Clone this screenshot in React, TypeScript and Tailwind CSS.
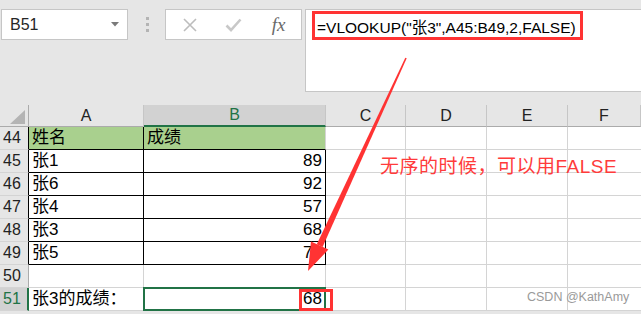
import React from "react";

type Row = { n: string; a?: string; b?: string; head?: boolean; table?: boolean; sel?: boolean };

const rows: Row[] = [
  { n: "44", a: "姓名", b: "成绩", head: true, table: true },
  { n: "45", a: "张1", b: "89", table: true },
  { n: "46", a: "张6", b: "92", table: true },
  { n: "47", a: "张4", b: "57", table: true },
  { n: "48", a: "张3", b: "68", table: true },
  { n: "49", a: "张5", b: "79", table: true },
  { n: "50" },
  { n: "51", a: "张3的成绩：", b: "68", sel: true },
];

const font = { fontFamily: '"Liberation Sans", "Noto Sans CJK SC", sans-serif' };

function ColHead({ label, sel }: { label: string; sel?: boolean }) {
  return (
    <div
      className={
        sel
          ? "flex items-center justify-center bg-[#d2d2d2] border-r border-r-[#c6c6c6] border-b-2 border-b-[#217346] text-[#217346] text-[16px]"
          : "flex items-center justify-center bg-[#e6e6e6] border-r border-r-[#c6c6c6] border-b border-b-[#ababab] text-[#222] text-[16px]"
      }
    >
      {label}
    </div>
  );
}

export default function App() {
  return (
    <div className="relative w-[641px] h-[314px] overflow-hidden bg-[#e6e6e6]" style={font}>
      {/* top bar */}
      <div className="flex items-start pt-[9px] h-[105px]">
        <div className="ml-[1px] w-[127px] h-[31px] bg-white border border-[#c6c6c6] flex items-center pl-[8px] pr-[8px] justify-between">
          <span className="text-[16px] text-[#262626]">B51</span>
          <svg width="8" height="5" viewBox="0 0 8 5">
            <polygon points="0,0 8,0 4,4.5" fill="#7a7a7a" />
          </svg>
        </div>
        <div className="w-[37px] h-[31px] flex flex-col items-center justify-center gap-[3px] pl-[1px]">
          <div className="w-[3px] h-[3px] bg-[#b4b4b4]" />
          <div className="w-[3px] h-[3px] bg-[#b4b4b4]" />
          <div className="w-[3px] h-[3px] bg-[#b4b4b4]" />
        </div>
        <div className="w-[137px] h-[31px] bg-white border border-[#c6c6c6] flex items-center">
          <div className="w-[45px] flex justify-center pl-[3px]">
            <svg width="14" height="14" viewBox="0 0 14 14">
              <path d="M1 1 L13 13 M13 1 L1 13" stroke="#bdbdbd" strokeWidth="1.6" />
            </svg>
          </div>
          <div className="w-[45px] flex justify-center">
            <svg width="17" height="14" viewBox="0 0 17 14">
              <path d="M1.5 7.5 L6 12 L15.5 1.5" stroke="#c8c8c8" strokeWidth="2.6" fill="none" />
            </svg>
          </div>
          <div className="w-[45px] flex justify-center">
            <span
              className="italic text-[19px] text-[#6a6a6a] leading-none"
              style={{ fontFamily: '"Liberation Serif", serif' }}
            >
              fx
            </span>
          </div>
        </div>
        <div className="ml-[3px] flex-1 h-[83px] bg-white border border-r-0 border-[#c6c6c6] pl-[11px] pt-[6px]">
          <span className="text-[15.5px] text-black">=VLOOKUP("张3",A45:B49,2,FALSE)</span>
        </div>
      </div>

      {/* grid */}
      <div className="grid grid-cols-[29px_115px_182px_80px_81px_81px_73px] grid-rows-[22px_repeat(8,23px)]">
        <div className="relative bg-[#e6e6e6] border-r border-r-[#ababab] border-b border-b-[#ababab]">
          <svg className="absolute left-[10px] top-[5px]" width="15" height="14" viewBox="0 0 15 14">
            <polygon points="15,0 15,14 0,14" fill="#b4b4b4" />
          </svg>
        </div>
        <ColHead label="A" />
        <ColHead label="B" sel />
        <ColHead label="C" />
        <ColHead label="D" />
        <ColHead label="E" />
        <ColHead label="F" />

        {rows.map((r) => (
          <React.Fragment key={r.n}>
            <div
              className={
                r.sel
                  ? "flex items-center pl-[3px] bg-[#d2d2d2] text-[#217346] text-[16px] border-r-2 border-r-[#217346] border-b border-b-[#d4d4d4]"
                  : r.table
                  ? "flex items-center pl-[3px] bg-[#e6e6e6] text-[#222] text-[16px] border-r border-r-black border-b border-b-[#d4d4d4]"
                  : "flex items-center pl-[3px] bg-[#e6e6e6] text-[#222] text-[16px] border-r border-r-[#ababab] border-b border-b-[#d4d4d4]"
              }
            >
              {r.n}
            </div>
            <div
              className={
                r.head
                  ? "flex items-center pl-[3px] bg-[#a9d08e] text-[17px] text-black border-r border-r-black border-b border-b-black"
                  : r.table
                  ? "flex items-center pl-[3px] bg-white text-[17px] text-black border-r border-r-black border-b border-b-black"
                  : "flex items-center pl-[3px] bg-white text-[17px] text-black border-r border-r-[#d4d4d4] border-b border-b-[#d4d4d4]"
              }
            >
              {r.a}
            </div>
            <div
              className={
                r.head
                  ? "relative flex items-center pl-[3px] bg-[#a9d08e] text-[17px] text-black border-r border-r-[#d4d4d4] border-b border-b-black"
                  : r.table
                  ? "relative flex items-center justify-end pr-[3px] bg-white text-[17px] text-black border-r border-r-black border-b border-b-black"
                  : "relative flex items-center justify-end pr-[3px] bg-white text-[17px] text-black border-r border-r-[#d4d4d4] border-b border-b-[#d4d4d4]"
              }
            >
              {r.b}
              {r.sel && (
                <>
                  <div className="absolute left-[-1px] top-[-1px] w-[183px] h-[24px] border-2 border-[#217346]" />
                  <div className="absolute left-[155px] top-[1px] w-[34px] h-[22px] border-[3px] border-[#f33]" />
                </>
              )}
            </div>
            <div className="bg-white border-r border-r-[#d4d4d4] border-b border-b-[#d4d4d4]" />
            <div className="bg-white border-r border-r-[#d4d4d4] border-b border-b-[#d4d4d4]" />
            <div className="bg-white border-r border-r-[#d4d4d4] border-b border-b-[#d4d4d4]" />
            <div className="bg-white border-b border-b-[#d4d4d4]" />
          </React.Fragment>
        ))}
      </div>

      {/* annotations */}
      <div className="absolute left-[312px] top-[11px] w-[271px] h-[29px] border-[3px] border-[#f33]" />
      <div className="absolute left-[380px] top-[154px] text-[19px] leading-[26px] text-[#ff3b3b] tracking-[0.5px] whitespace-nowrap">
        无序的时候，可以用FALSE
      </div>
      <div className="absolute left-[527px] top-[288px] text-[12.5px] text-[#9a9a9a] whitespace-nowrap">
        CSDN @KathAmy
      </div>
      <svg className="absolute left-0 top-0 pointer-events-none" width="641" height="314" viewBox="0 0 641 314">
        <polygon points="406.7,58.3 405.3,57.7 316.8,244.3 322.6,246.9" fill="#f33" />
        <polygon points="308,271 311,241.5 328.4,249.6" fill="#f33" />
      </svg>
    </div>
  );
}
